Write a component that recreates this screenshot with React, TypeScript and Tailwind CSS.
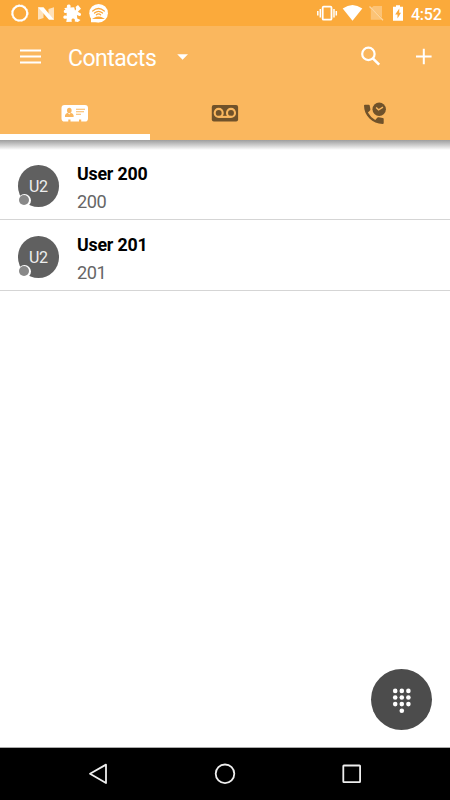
import type { ReactNode } from "react";

type IconProps = { box: string; className: string; children: ReactNode };

function Icon({ box, className, children }: IconProps) {
  return (
    <svg viewBox={box} className={`block shrink-0 ${className}`} fill="none">
      {children}
    </svg>
  );
}

function StatusBar() {
  return (
    <div className="flex h-[26px] shrink-0 items-center bg-[#fbaa3b] pl-[10px]">
      <Icon box="10 0 20 26" className="h-[26px] w-[20px]">
        <circle cx="19.8" cy="13.2" r="7.4" stroke="#fff" strokeWidth="2" />
        <circle cx="19.8" cy="13.2" r="8.4" stroke="#fff" strokeOpacity=".6" strokeWidth="1" strokeDasharray="2 1.4" />
      </Icon>
      <Icon box="37 0 18 26" className="ml-[7px] h-[26px] w-[18px]">
        <path d="M38 7.2 43.5 9V18L38 19.8ZM54 7.2 48.5 9V18L54 19.8Z" fill="#fff" fillOpacity=".65" />
        <path d="M38 7.2H43.5L54 19.8H49Z" fill="#fff" />
      </Icon>
      <Icon box="62 0 20 26" className="ml-[7px] h-[26px] w-[20px]">
        <path
          d="M64.3 8.2 67.2 7.6C66.2 5.6 67.5 4.3 69 4.5 70.6 4.7 71 6.2 70.4 7.6L74.2 7.2 75 10.4C76.2 9.9 76.5 8.3 75.5 6.9L78 5 81 8.8 78.2 11.2C77.6 12.4 79.3 12.4 80.3 12.9 81.7 13.9 81 15.9 79.5 16 78.5 16 77.6 15.5 76.9 14.8L77.3 18.6 80.5 20 77.9 22 74.7 21.4C75.4 19.6 74.4 18.4 73 18.5 71.4 18.7 71.3 20.2 71.9 21.7L66.3 22 66.8 18.5C65.2 19.2 63.4 18.8 63.3 17.2 63.3 15.6 65.1 15.1 66.6 16L66.7 12.8C65 13.4 63.6 12.7 63.8 11.2 64 10 65 9.9 65.7 10.2Z"
          fill="#fff"
        />
      </Icon>
      <Icon box="88 0 22 26" className="ml-[6px] h-[26px] w-[22px]">
        <circle cx="98.6" cy="13.2" r="9.3" fill="#fff" />
        <path d="M91 15V22.3H99Z" fill="#fff" />
        <g stroke="#fba93b" strokeWidth="1.3" strokeLinecap="round">
          <path d="M92.7 11.1Q98.5 6 104.3 11.1M94.5 13.1Q98.5 9.7 102.5 13.1M96.4 14.8Q98.5 13.1 100.6 14.8" />
          <path d="M94.5 18.4Q98.5 16.1 102.5 18.4Z" />
        </g>
      </Icon>
      <div className="flex-1" />
      <Icon box="317 0 21 26" className="h-[26px] w-[21px]">
        <rect x="322.7" y="6.7" width="8.8" height="13" rx="1" stroke="#fff" strokeWidth="1.8" />
        <path d="M320.3 9V17.4M334 9V17.4M317.8 11V15.4M336.3 11V15.4" stroke="#fff" strokeWidth="1.5" />
      </Icon>
      <Icon box="342 0 22 26" className="ml-[4px] h-[26px] w-[22px]">
        <path d="M342.7 8.5Q352.5 1.3 362.3 8.5L352.5 20.8Z" fill="#fff" />
      </Icon>
      <Icon box="368 0 16 26" className="ml-[4px] h-[26px] w-[16px]">
        <path d="M373.5 6H382V17.7L371.5 7.7ZM370.8 9 381.5 19.8H370.8Z" fill="#fff" fillOpacity=".3" />
        <path d="M369.5 6.5 383 20.3" stroke="#fff" strokeOpacity=".5" strokeWidth="1.3" />
      </Icon>
      <Icon box="392 0 12 26" className="ml-[8px] h-[26px] w-[12px]">
        <path d="M393 6.7H396V5.2H400V6.7H403V20.8H393Z" fill="#fff" />
        <path d="M399.3 8.5 395.2 14.4H397.5V18.6L401 12.7H399.2Z" fill="#fba93b" />
      </Icon>
      <span className="ml-[7px] w-[39px] pt-[3px] text-[16px] leading-[24px] font-medium tracking-[-0.25px] text-white">4:52</span>
    </div>
  );
}

function Toolbar() {
  return (
    <div className="flex h-[62px] items-center pl-5">
      <Icon box="20 46 22 22" className="h-[22px] w-[22px]">
        <path d="M20 50.5H41M20 56.5H41M20 62.5H41" stroke="#fff" strokeWidth="2" />
      </Icon>
      <span className="ml-[26px] w-[109px] pt-[3px] text-[23px] leading-7 tracking-[-0.5px] text-white">Contacts</span>
      <Icon box="177 46 12 22" className="h-[22px] w-3">
        <path d="M177.2 54.2H188L182.6 59.8Z" fill="#fff" />
      </Icon>
      <div className="flex-1" />
      <Icon box="360 46 22 22" className="h-[22px] w-[22px]">
        <circle cx="368.4" cy="53.9" r="6.2" stroke="#fff" strokeWidth="2.2" />
        <path d="M372.8 58.3 379.2 64.7" stroke="#fff" strokeWidth="2.6" />
      </Icon>
      <Icon box="415 46 18 22" className="mr-[17px] ml-[33px] h-[22px] w-[18px]">
        <path d="M416 56.5H431.6M423.8 48.7V64.3" stroke="#fff" strokeWidth="2" />
      </Icon>
    </div>
  );
}

function Tabs() {
  return (
    <div className="grid h-[52px] grid-cols-3">
      <div className="flex justify-center border-b-6 border-white pt-[14px]">
        <Icon box="61 102 28 22" className="h-[22px] w-7">
          <path
            d="M64.5 105H85Q88 105 88 108V118.5Q88 121.6 85 121.6H81.2V119.4H79V121.6H70.5V119.4H68.3V121.6H64.5Q61.5 121.6 61.5 118.5V108Q61.5 105 64.5 105Z"
            fill="#fff"
          />
          <ellipse cx="69.3" cy="110.5" rx="2.3" ry="2.8" fill="#fab75e" />
          <path d="M65 117V115.3Q65.4 113.4 67.8 112.8L69.3 114.4 70.8 112.8Q73.3 113.4 73.6 115.3V117Z" fill="#fab75e" />
          <path d="M76 109.3H85M76 111.8H84M76 114.3H81" stroke="#fab75e" strokeWidth="1.1" />
        </Icon>
      </div>
      <div className="flex justify-center pt-[14px]">
        <Icon box="211 102 28 22" className="h-[22px] w-7">
          <rect x="211.8" y="105" width="26.3" height="16.5" rx="2" fill="#70522a" />
          <g stroke="#fab75e" strokeWidth="2.1">
            <circle cx="218.7" cy="112.9" r="4" />
            <circle cx="231" cy="112.9" r="4" />
            <path d="M218.7 116.9H231" />
          </g>
        </Icon>
      </div>
      <div className="flex justify-center pt-[12px]">
        <Icon box="362 100 26 26" className="h-[26px] w-[26px]">
          <path
            d="M364 105.8Q364 104.9 365 104.9H368.7Q369.6 104.9 369.7 105.8L370.4 109.4Q370.5 110 370 110.6L367.9 112.8Q370.5 117.6 375.2 120.1L377.5 117.8Q378 117.3 378.7 117.5L382.8 118.2Q383.7 118.4 383.7 119.2V123.3Q383.7 124.3 382.7 124.3C372.5 124.3 364 116 364 105.8Z"
            transform="translate(0 -.2)"
            fill="#70522a"
          />
          <circle cx="379.2" cy="109.2" r="6.7" fill="#70522a" />
          <path d="M376.1 107.4 378.6 109.8 383 107.2" stroke="#fab75e" strokeWidth="1.4" />
        </Icon>
      </div>
    </div>
  );
}

function ContactRow({ name, number, className }: { name: string; number: string; className: string }) {
  return (
    <div className={`flex border-b border-[#d5d5d5] pl-[17.5px] ${className}`}>
      <div className="relative mt-px flex h-[41.5px] w-[41.5px] items-center justify-center rounded-full bg-[#606060] text-[16px] tracking-[-0.5px] text-[#eeeeee]">
        <span className="pt-[3px]">U2</span>
        <span className="absolute bottom-0 left-0 h-[13px] w-[13px] rounded-full bg-white p-[1.2px]">
          <span className="block h-full w-full rounded-full bg-[#888888]" />
        </span>
      </div>
      <div className="ml-[18px] flex flex-col">
        <span className="text-[17.8px] leading-5 font-bold tracking-[-0.2px] text-black">{name}</span>
        <span className="mt-[8px] text-[18.2px] leading-5 tracking-[-0.5px] text-[#666666]">{number}</span>
      </div>
    </div>
  );
}

function DialButton() {
  return (
    <button className="flex h-[61px] w-[61px] items-center justify-center rounded-full bg-[#4c4c4c]">
      <Icon box="391 685 21 28" className="h-[28px] w-[21px]">
        <g fill="#fff">
          {[395.2, 401.8, 408.4].map((x) =>
            [689.9, 696.5, 703.1].map((y) => <circle key={`${x}-${y}`} cx={x} cy={y} r="2.3" />),
          )}
          <circle cx="401.8" cy="709.7" r="2.3" />
        </g>
      </Icon>
    </button>
  );
}

function NavBar() {
  return (
    <div className="flex h-[53px] shrink-0 items-center justify-between border-t border-[#aaaaaa] bg-black pr-[87px] pl-[88px]">
      <Icon box="88 763 20 22" className="h-[22px] w-5">
        <path d="M90 773.8 106 764.6V783Z" stroke="#eeeeee" strokeWidth="1.8" strokeLinejoin="round" />
      </Icon>
      <Icon box="214 763 22 22" className="h-[22px] w-[22px]">
        <circle cx="225" cy="773.8" r="9.3" stroke="#eeeeee" strokeWidth="1.8" />
      </Icon>
      <Icon box="341 763 22 22" className="h-[22px] w-[22px]">
        <rect x="343.3" y="765.5" width="16.8" height="16.6" rx=".6" stroke="#eeeeee" strokeWidth="1.8" />
      </Icon>
    </div>
  );
}

export default function App() {
  return (
    <div className="flex h-[800px] w-[450px] flex-col overflow-hidden bg-white font-['Roboto','Noto_Sans',sans-serif]">
      <StatusBar />
      <header className="h-[114px] shrink-0 bg-[#fab75e]">
        <Toolbar />
        <Tabs />
      </header>
      <div className="h-[10px] shrink-0 bg-linear-to-b from-[#9e9e9e] via-[#cccccc] to-white" />
      <main className="flex flex-1 flex-col">
        <ContactRow name="User 200" number="200" className="h-[70px] pt-[14px]" />
        <ContactRow name="User 201" number="201" className="h-[71px] pt-[15px]" />
        <div className="mt-auto mr-[18px] mb-[17px] flex justify-end">
          <DialButton />
        </div>
      </main>
      <NavBar />
    </div>
  );
}
